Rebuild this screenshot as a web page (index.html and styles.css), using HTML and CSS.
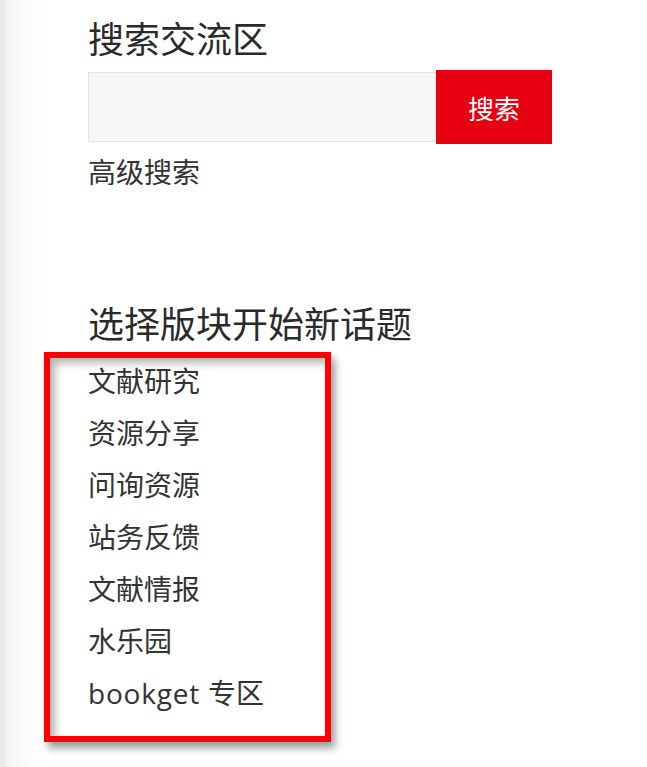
FILE: index.html
```html
<!DOCTYPE html>
<html lang="zh-CN">
<head>
<meta charset="utf-8">
<title>搜索交流区</title>
<link rel="stylesheet" href="styles.css">
</head>
<body>
<div class="main">
  <h2 class="title">搜索交流区</h2>
  <form class="search">
    <input class="search-input" type="text">
    <button class="search-btn" type="button">搜索</button>
  </form>
  <a class="adv" href="#">高级搜索</a>
  <h2 class="title title-2">选择版块开始新话题</h2>
  <ul class="forums">
    <li><a href="#">文献研究</a></li>
    <li><a href="#">资源分享</a></li>
    <li><a href="#">问询资源</a></li>
    <li><a href="#">站务反馈</a></li>
    <li><a href="#">文献情报</a></li>
    <li><a href="#">水乐园</a></li>
    <li><a href="#"><span class="latin">bookget </span>专区</a></li>
  </ul>
  <div class="highlight"></div>
</div>
</body>
</html>
```
FILE: styles.css
```css
html, body {
  margin: 0;
  padding: 0;
  height: 100%;
}
body {
  background: linear-gradient(to right, #eaeaea 0, #ececec 5px, #f4f4f4 7px, #fbfbfb 25px, #ffffff 45px);
  font-family: "Open Sans", "Noto Sans CJK SC", sans-serif;
  color: #333;
}
.main {
  position: relative;
  padding: 15px 0 0 88px;
  height: 752px;
}
.title {
  margin: 0;
  font-family: "Noto Sans CJK SC", sans-serif;
  font-weight: 400;
  font-size: 36px;
  line-height: 44px;
  color: #2a2a2a;
}
.search {
  display: flex;
  align-items: center;
  margin-top: 11px;
  width: 464px;
}
.search-input {
  box-sizing: border-box;
  width: 348px;
  height: 70px;
  margin: 0;
  border: 1px solid #e4e4e4;
  border-right: none;
  background: #f7f7f7;
  outline: none;
}
.search-btn {
  box-sizing: border-box;
  width: 116px;
  height: 74px;
  margin: 0;
  border: none;
  background: #e60012;
  color: #fff;
  font-family: "Noto Sans CJK SC", sans-serif;
  font-size: 26px;
  padding: 0;
}
.adv {
  display: block;
  margin-top: 9px;
  font-family: "Noto Sans CJK SC", sans-serif;
  font-size: 28px;
  line-height: 36px;
  color: #333;
  text-decoration: none;
}
.title-2 {
  margin-top: 111px;
}
.forums {
  list-style: none;
  margin: 11px 0 0;
  padding: 0;
}
.forums li {
  font-size: 28px;
  line-height: 52px;
}
.forums a {
  color: #333;
  text-decoration: none;
}
.latin {
  letter-spacing: 0.8px;
}
.highlight {
  position: absolute;
  left: 44px;
  top: 352px;
  width: 287px;
  height: 390px;
  box-sizing: border-box;
  border: 6px solid #ff0000;
  box-shadow: 4px 6px 8px rgba(0, 0, 0, 0.4), inset 5px 5px 8px rgba(0, 0, 0, 0.3);
  pointer-events: none;
}
```
